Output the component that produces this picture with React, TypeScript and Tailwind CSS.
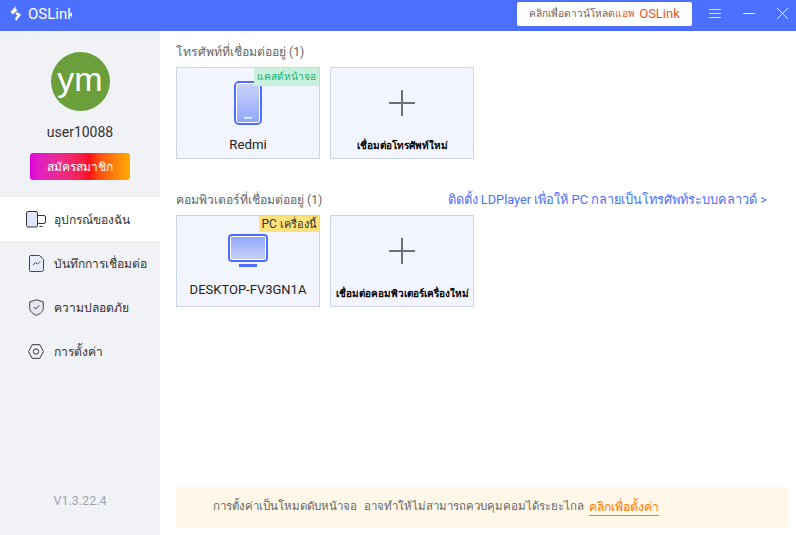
const FONT = "font-['Roboto','Noto_Sans','Liberation_Sans',sans-serif]";

function DevicesIcon() {
  return (
    <svg width="20" height="17" viewBox="0 0 20 17" fill="none">
      <rect x="0.5" y="0.5" width="11" height="15.500" rx="1.500" fill="#dfe5fb" stroke="#333" />
      <path d="M12 4.500h6a1.500 1.500 0 0 1 1.500 1.500v5a1.500 1.500 0 0 1-1.500 1.500h-6" stroke="#333" />
      <path d="M13.500 15.500h3" stroke="#333" />
    </svg>
  );
}

function RecordIcon() {
  return (
    <svg width="15" height="17" viewBox="0 0 15 17" fill="none">
      <path d="M1.500.5h9l4 4v10a2 2 0 0 1-2 2h-11a1 1 0 0 1-1-1v-14a1 1 0 0 1 1-1z" fill="#e9ecfa" stroke="#444" />
      <path d="M4 10l2.500-2.500 2 1.500L11 6.500" stroke="#444" />
    </svg>
  );
}

function ShieldIcon() {
  return (
    <svg width="15" height="17" viewBox="0 0 15 17" fill="none">
      <path d="M7.500.7l6.800 2.200v6c0 3.500-3 6-6.800 7.400C3.700 14.900.7 12.400.7 8.900v-6z" fill="#e4e7f0" stroke="#444" />
      <path d="M4.800 8l2 2 3.500-3.800" stroke="#444" />
    </svg>
  );
}

function GearIcon() {
  return (
    <svg width="16" height="15" viewBox="0 0 16 15" fill="none">
      <path d="M4.200.7h7.600l3.600 6.800-3.600 6.800H4.200L.6 7.500z" stroke="#333" />
      <circle cx="8" cy="7.500" r="2.700" stroke="#333" />
    </svg>
  );
}

function PhoneIcon() {
  return (
    <svg width="28" height="44" viewBox="0 0 28 44">
      <defs>
        <linearGradient id="phoneFill" x1="0" y1="0" x2="0" y2="1">
          <stop offset="0" stopColor="#cdd5fb" />
          <stop offset="1" stopColor="#8ea4fb" />
        </linearGradient>
      </defs>
      <rect x="1" y="1" width="26" height="42" rx="4" fill="url(#phoneFill)" stroke="#4d6fff" strokeWidth="2" />
      <rect x="2.500" y="2.500" width="23" height="39" rx="2" fill="none" stroke="#fff" strokeWidth="1" />
      <rect x="10" y="36" width="8" height="1.500" fill="#fff" />
    </svg>
  );
}

function MonitorIcon() {
  return (
    <svg width="40" height="33" viewBox="0 0 40 33">
      <defs>
        <linearGradient id="monitorFill" x1="0" y1="0" x2="0" y2="1">
          <stop offset="0" stopColor="#8ea4fb" />
          <stop offset="1" stopColor="#cdd5fb" />
        </linearGradient>
      </defs>
      <rect x="1" y="1" width="38" height="26" rx="3" fill="url(#monitorFill)" stroke="#4d6fff" strokeWidth="2" />
      <rect x="2.500" y="2.500" width="35" height="23" rx="1" fill="none" stroke="#fff" strokeWidth="1" />
      <rect x="11" y="30" width="18" height="3" fill="#4d6fff" />
    </svg>
  );
}

function PlusIcon() {
  return (
    <svg width="26" height="26" viewBox="0 0 26 26">
      <path d="M13 0v26M0 13h26" stroke="#6b6f7a" strokeWidth="2" />
    </svg>
  );
}

function AddCard({ label }: { label: string }) {
  return (
    <div className="flex h-[92px] w-[144px] flex-col items-center border border-[#cfd3e6] bg-[#f2f4fe]">
      <div className="mt-[22px]">
        <PlusIcon />
      </div>
      <div className="mt-auto pb-[3px] text-[10px] leading-[18px] font-semibold whitespace-nowrap text-black">{label}</div>
    </div>
  );
}

const NAV = [
  { label: "อุปกรณ์ของฉัน", icon: <DevicesIcon />, active: true },
  { label: "บันทึกการเชื่อมต่อ", icon: <RecordIcon />, active: false },
  { label: "ความปลอดภัย", icon: <ShieldIcon />, active: false },
  { label: "การตั้งค่า", icon: <GearIcon />, active: false },
];

export default function App() {
  return (
    <div className={`flex h-[535px] w-[796px] flex-col overflow-hidden bg-white ${FONT}`}>
      {/* title bar */}
      <div className="flex h-[31px] shrink-0 items-center bg-[#4d6fff] pb-[5px] pl-[9px] text-white">
        <svg width="14" height="15" viewBox="0 0 14 16" fill="#fff">
          <path d="M7 0L1 6.500l3 2.500L8.500 4.500 6.500 3z" />
          <path d="M8 6.500l4.500 2.500L7 16l-1-3 2.500-3-2-1.500z" />
        </svg>
        <div className="mt-[2px] ml-[5px] w-[44px] overflow-hidden text-[15px] leading-[20px] whitespace-nowrap">OSLink</div>
        <div className="mt-[2px] ml-auto flex h-[24px] w-[175px] items-center justify-center rounded-[2px] bg-white text-[10.200px] text-[#666]">
          คลิกเพื่อดาวน์โหลด<span className="text-[#e8591c]">แอพ</span>
          <span className="ml-1 text-[13px] text-[#e8591c]">OSLink</span>
        </div>
        <div className="ml-[17px] flex w-[12px] flex-col gap-[3px]">
          <div className="h-px bg-white/80" />
          <div className="h-px bg-white/80" />
          <div className="h-px bg-white/80" />
        </div>
        <div className="ml-[22px] h-px w-[12px] bg-white/90" />
        <svg className="mr-[8px] ml-[22px]" width="11" height="11" viewBox="0 0 11 11">
          <path d="M0 0l11 11M11 0L0 11" stroke="#fff" strokeOpacity="0.9" />
        </svg>
      </div>

      <div className="flex min-h-0 flex-1">
        {/* sidebar */}
        <div className="flex w-[160px] shrink-0 flex-col items-center bg-[#f0f2f6]">
          <div className="mt-[21px] flex h-[59px] w-[59px] items-center justify-center rounded-full bg-[#6a9f3c] pb-[5px] font-['Liberation_Sans',sans-serif] text-[34px] leading-none text-white">
            ym
          </div>
          <div className="mt-[11px] text-[14px] leading-[20px] text-[#333]">user10088</div>
          <div className="mt-[11px] flex h-[27px] w-[100px] items-center justify-center rounded-[3px] bg-gradient-to-r from-[#dc00dc] via-[#ff0a14] via-60% to-[#ffab00] text-[12px] font-medium text-white">
            สมัครสมาชิก
          </div>
          <div className="mt-[17px] w-full">
            {NAV.map((item) => (
              <div
                key={item.label}
                className={`flex h-[44px] items-center text-[12.100px] text-[#333] ${item.active ? "bg-white" : ""}`}
              >
                <div className="flex w-[54px] shrink-0 justify-center pl-[18px]">{item.icon}</div>
                <span className="pt-[2px] whitespace-nowrap">{item.label}</span>
              </div>
            ))}
          </div>
          <div className="mt-auto mb-[25px] text-[12.500px] leading-[18px] text-[#a0a4ad]">V1.3.22.4</div>
        </div>

        {/* main */}
        <div className="flex min-w-0 flex-1 flex-col pt-[12px] pr-2 pl-4">
          <div className="text-[12.200px] leading-[18px] text-[#666]">โทรศัพท์ที่เชื่อมต่ออยู่ (1)</div>
          <div className="mt-[6px] flex gap-[10px]">
            <div className="relative flex h-[92px] w-[144px] flex-col items-center border border-[#cfd3e6] bg-[#f2f4fe]">
              <div className="absolute top-0 right-0 h-[18px] w-[65px] bg-[#c8f0dc] text-center text-[10.200px] leading-[18px] text-[#16b070]">
                แคสต์หน้าจอ
              </div>
              <div className="mt-[13px]">
                <PhoneIcon />
              </div>
              <div className="mt-auto pb-[3px] text-[13.200px] leading-[20px] text-[#222]">Redmi</div>
            </div>
            <AddCard label="เชื่อมต่อโทรศัพท์ใหม่" />
          </div>

          <div className="mt-[32px] flex items-center justify-between pr-[21px] leading-[18px]">
            <div className="text-[12.200px] text-[#666]">คอมพิวเตอร์ที่เชื่อมต่ออยู่ (1)</div>
            <div className="text-[12.800px] text-[#4d6fff]">ติดตั้ง LDPlayer เพื่อให้ PC กลายเป็นโทรศัพท์ระบบคลาวด์ &gt;</div>
          </div>
          <div className="mt-[6px] flex gap-[10px]">
            <div className="relative flex h-[92px] w-[144px] flex-col items-center border border-[#cfd3e6] bg-[#f2f4fe]">
              <div className="absolute top-0 right-0 h-[16px] w-[60px] bg-[#ffe27a] text-center text-[11px] leading-[16px] text-[#333]">
                <span className="text-[12px]">PC</span> เครื่องนี้
              </div>
              <div className="mt-[18px]">
                <MonitorIcon />
              </div>
              <div className="mt-auto pb-[6px] text-[13px] leading-[20px] text-[#222]">DESKTOP-FV3GN1A</div>
            </div>
            <AddCard label="เชื่อมต่อคอมพิวเตอร์เครื่องใหม่" />
          </div>

          <div className="mt-auto mb-2 flex h-[40px] items-center bg-[#fff7e8] pl-[37px] text-[11.500px] [word-spacing:4px] text-[#666]">
            การตั้งค่าเป็นโหมดดับหน้าจอ อาจทำให้ไม่สามารถควบคุมคอมได้ระยะไกล
            <span className="ml-[5px] border-b border-[#ff7a00] text-[12.200px] leading-[16px] text-[#ff7a00]">คลิกเพื่อตั้งค่า</span>
          </div>
        </div>
      </div>
    </div>
  );
}
